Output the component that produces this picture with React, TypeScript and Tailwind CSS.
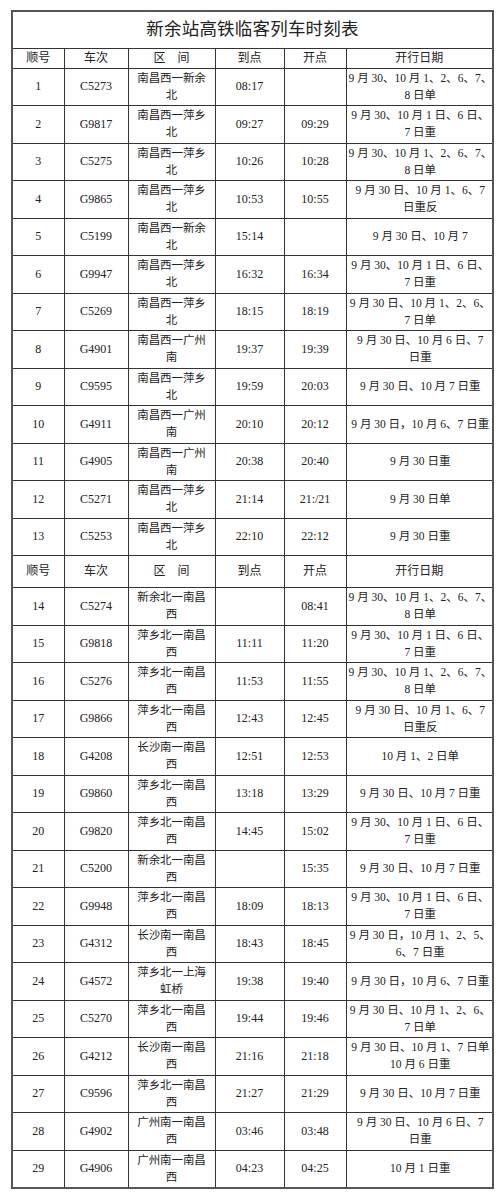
import React from "react";

type Row = [string, string, string[], string, string, string[]];

const part1: Row[] = [
  ["1", "C5273", ["南昌西一新余", "北"], "08:17", "", ["9 月 30、10 月 1、2、6、7、", "8 日单"]],
  ["2", "G9817", ["南昌西一萍乡", "北"], "09:27", "09:29", ["9 月 30、10 月 1 日、6 日、", "7 日重"]],
  ["3", "C5275", ["南昌西一萍乡", "北"], "10:26", "10:28", ["9 月 30、10 月 1、2、6、7、", "8 日单"]],
  ["4", "G9865", ["南昌西一萍乡", "北"], "10:53", "10:55", ["9 月 30 日、10 月 1、6、7", "日重反"]],
  ["5", "C5199", ["南昌西一新余", "北"], "15:14", "", ["9 月 30 日、10 月 7"]],
  ["6", "G9947", ["南昌西一萍乡", "北"], "16:32", "16:34", ["9 月 30、10 月 1 日、6 日、", "7 日重"]],
  ["7", "C5269", ["南昌西一萍乡", "北"], "18:15", "18:19", ["9 月 30 日、10 月 1、2、6、", "7 日单"]],
  ["8", "G4901", ["南昌西一广州", "南"], "19:37", "19:39", ["9 月 30 日、10 月 6 日、7", "日重"]],
  ["9", "C9595", ["南昌西一萍乡", "北"], "19:59", "20:03", ["9 月 30 日、10 月 7 日重"]],
  ["10", "G4911", ["南昌西一广州", "南"], "20:10", "20:12", ["9 月 30 日，10 月 6、7 日重"]],
  ["11", "G4905", ["南昌西一广州", "南"], "20:38", "20:40", ["9 月 30 日重"]],
  ["12", "C5271", ["南昌西一萍乡", "北"], "21:14", "21:/21", ["9 月 30 日单"]],
  ["13", "C5253", ["南昌西一萍乡", "北"], "22:10", "22:12", ["9 月 30 日重"]],
];

const part2: Row[] = [
  ["14", "C5274", ["新余北一南昌", "西"], "", "08:41", ["9 月 30、10 月 1、2、6、7、", "8 日单"]],
  ["15", "G9818", ["萍乡北一南昌", "西"], "11:11", "11:20", ["9 月 30、10 月 1 日、6 日、", "7 日重"]],
  ["16", "C5276", ["萍乡北一南昌", "西"], "11:53", "11:55", ["9 月 30、10 月 1、2、6、7、", "8 日单"]],
  ["17", "G9866", ["萍乡北一南昌", "西"], "12:43", "12:45", ["9 月 30 日、10 月 1、6、7", "日重反"]],
  ["18", "G4208", ["长沙南一南昌", "西"], "12:51", "12:53", ["10 月 1、2 日单"]],
  ["19", "G9860", ["萍乡北一南昌", "西"], "13:18", "13:29", ["9 月 30 日、10 月 7 日重"]],
  ["20", "G9820", ["萍乡北一南昌", "西"], "14:45", "15:02", ["9 月 30、10 月 1 日、6 日、", "7 日重"]],
  ["21", "C5200", ["新余北一南昌", "西"], "", "15:35", ["9 月 30 日、10 月 7 日重"]],
  ["22", "G9948", ["萍乡北一南昌", "西"], "18:09", "18:13", ["9 月 30、10 月 1 日、6 日、", "7 日重"]],
  ["23", "G4312", ["长沙南一南昌", "西"], "18:43", "18:45", ["9 月 30 日，10 月 1、2、5、", "6、7 日重"]],
  ["24", "G4572", ["萍乡北一上海", "虹桥"], "19:38", "19:40", ["9 月 30 日，10 月 6、7 日重"]],
  ["25", "C5270", ["萍乡北一南昌", "西"], "19:44", "19:46", ["9 月 30 日、10 月 1、2、6、", "7 日单"]],
  ["26", "G4212", ["长沙南一南昌", "西"], "21:16", "21:18", ["9 月 30 日、10 月 1、7 日单", "10 月 6 日重"]],
  ["27", "C9596", ["萍乡北一南昌", "西"], "21:27", "21:29", ["9 月 30 日、10 月 7 日重"]],
  ["28", "G4902", ["广州南一南昌", "西"], "03:46", "03:48", ["9 月 30 日、10 月 6 日、7", "日重"]],
  ["29", "G4906", ["广州南一南昌", "西"], "04:23", "04:25", ["10 月 1 日重"]],
];

const cell = "border border-[#333] p-0 text-center align-middle";

function Header({ h }: { h: string }) {
  return (
    <tr className={`${h} text-[12px]`}>
      <td className={cell}>顺号</td>
      <td className={cell}>车次</td>
      <td className={cell}>区　间</td>
      <td className={cell}>到点</td>
      <td className={cell}>开点</td>
      <td className={cell}>开行日期</td>
    </tr>
  );
}

function DataRow({ r }: { r: Row }) {
  return (
    <tr className="h-[37.5px]">
      <td className={`${cell} text-[12px]`}>{r[0]}</td>
      <td className={`${cell} text-[12px]`}>{r[1]}</td>
      <td className={`${cell} text-[11.5px] tracking-[-0.1px]`}>
        {r[2].map((l, i) => (
          <div key={i} className="whitespace-nowrap">{l}</div>
        ))}
      </td>
      <td className={`${cell} text-[12px]`}>{r[3]}</td>
      <td className={`${cell} text-[12px]`}>{r[4]}</td>
      <td className={`${cell} text-[11.5px] pl-[2px]`}>
        {r[5].map((l, i) => (
          <div key={i} className="whitespace-pre">{l}</div>
        ))}
      </td>
    </tr>
  );
}

export default function App() {
  return (
    <div
      className="w-[500px] h-[1198px] bg-white pt-[10px] pl-[11px] text-[#222]"
      style={{ fontFamily: '"Liberation Serif", "Noto Sans CJK SC", serif' }}
    >
      <table className="table-fixed border-collapse w-[481px] border-2 border-[#555] leading-[17px]">
        <colgroup>
          <col className="w-[52px]" />
          <col className="w-[64px]" />
          <col className="w-[87px]" />
          <col className="w-[69px]" />
          <col className="w-[62px]" />
          <col className="w-[147px]" />
        </colgroup>
        <tbody>
          <tr className="h-[37px]">
            <td colSpan={6} className={`${cell} text-[17.5px] tracking-[0.2px]`}>
              新余站高铁临客列车时刻表
            </td>
          </tr>
          <Header h="h-[20px]" />
          {part1.map((r) => (
            <DataRow key={r[0]} r={r} />
          ))}
          <Header h="h-[32px]" />
          {part2.map((r) => (
            <DataRow key={r[0]} r={r} />
          ))}
        </tbody>
      </table>
    </div>
  );
}
